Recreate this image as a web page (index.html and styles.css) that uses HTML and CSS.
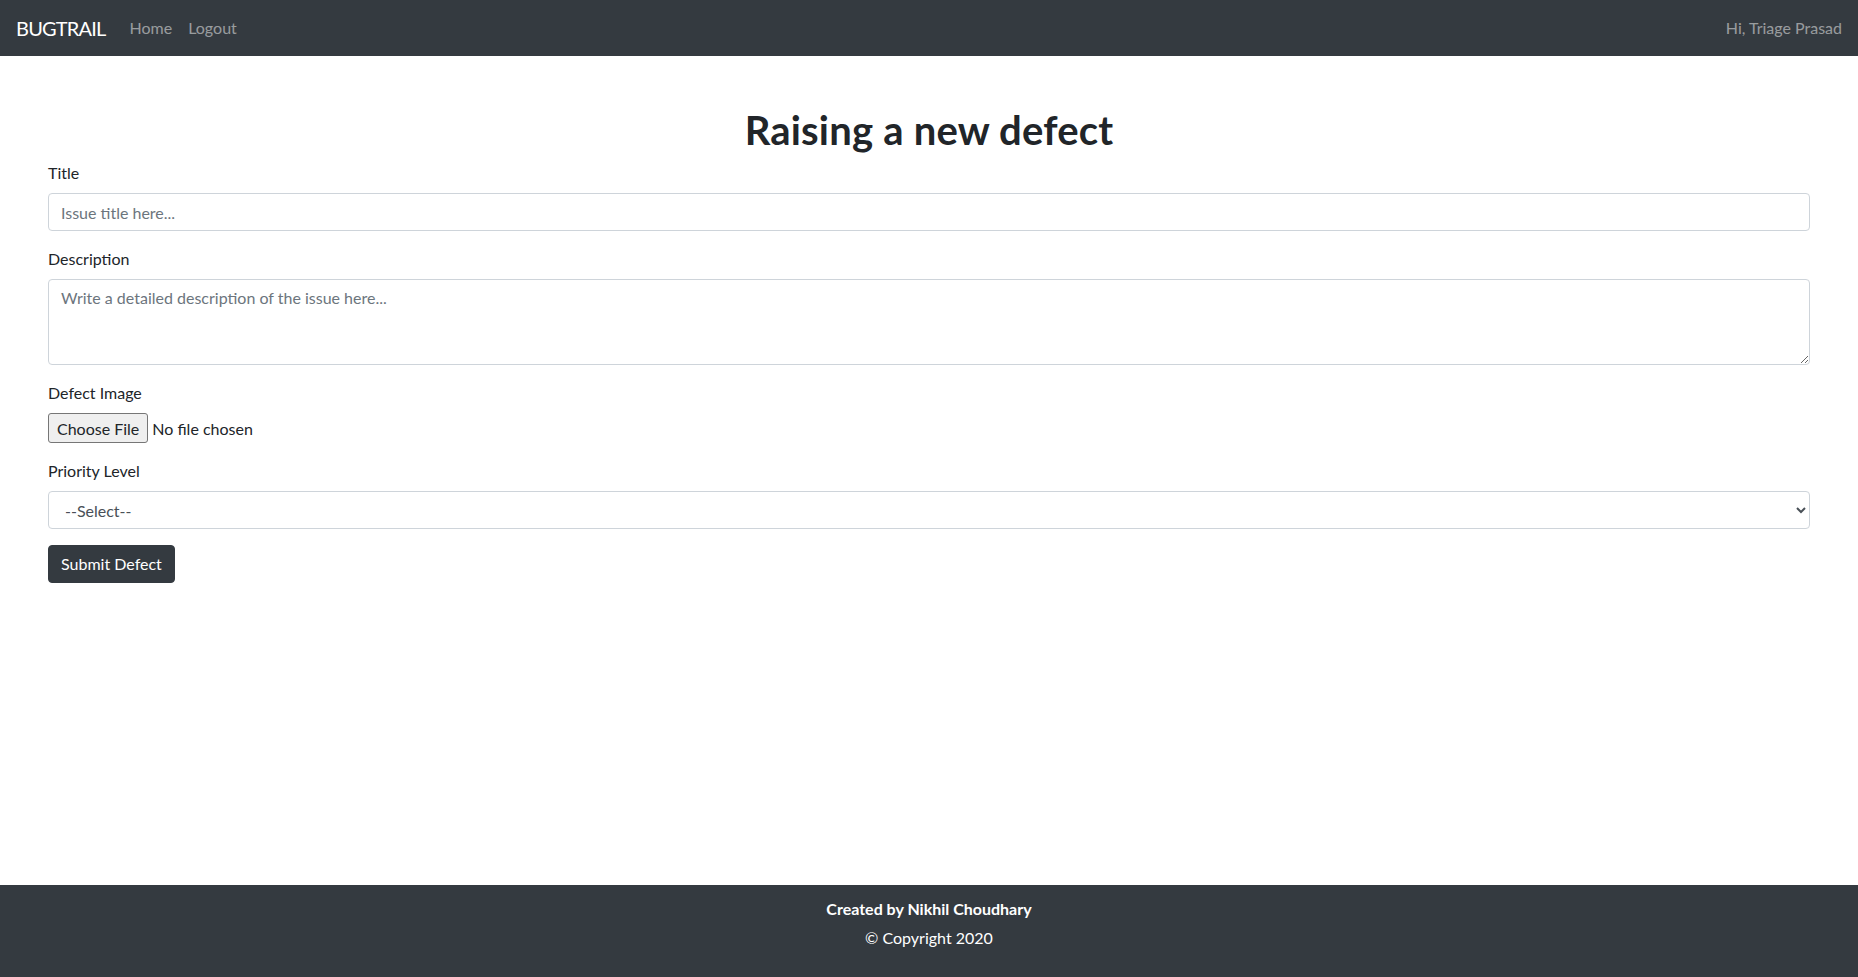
FILE: index.html
```html
<!DOCTYPE html>
<html lang="en">
<head>
<meta charset="utf-8">
<title>BugTrail</title>
<link rel="stylesheet" href="styles.css">
</head>
<body>
<nav class="navbar">
  <div class="nav-left">
    <a class="brand" href="#">BUGTRAIL</a>
    <a class="nav-link" href="#">Home</a>
    <a class="nav-link" href="#">Logout</a>
  </div>
  <span class="nav-user">Hi, Triage Prasad</span>
</nav>
<main class="content">
  <h1 class="page-title">Raising a new defect</h1>
  <form class="defect-form">
    <div class="form-group">
      <label class="label" for="title">Title</label>
      <input class="form-control" id="title" type="text" placeholder="Issue title here...">
    </div>
    <div class="form-group">
      <label class="label" for="desc">Description</label>
      <textarea class="form-control textarea" id="desc" rows="3" placeholder="Write a detailed description of the issue here..."></textarea>
    </div>
    <div class="form-group">
      <label class="label" for="img">Defect Image</label>
      <input class="file-input" id="img" type="file">
    </div>
    <div class="form-group">
      <label class="label" for="prio">Priority Level</label>
      <select class="form-control select" id="prio">
        <option>--Select--</option>
        <option>Low</option>
        <option>Medium</option>
        <option>High</option>
      </select>
    </div>
    <button class="btn-submit" type="button">Submit Defect</button>
  </form>
</main>
<footer class="footer">
  <div class="footer-author">Created by Nikhil Choudhary</div>
  <div class="footer-copy">© Copyright 2020</div>
</footer>
</body>
</html>
```
FILE: styles.css
```css
* { box-sizing: border-box; }
html, body { height: 100%; }
body {
  margin: 0;
  font-family: Lato, "Liberation Sans", sans-serif;
  font-size: 16px;
  line-height: 1.5;
  color: #212529;
  background: #fff;
  display: flex;
  flex-direction: column;
  min-height: 100vh;
}
.navbar {
  height: 56px;
  background: #343a40;
  display: flex;
  align-items: center;
  justify-content: space-between;
  padding: 8px 16px;
  flex: none;
}
.nav-left { display: flex; align-items: center; }
.brand {
  color: #fff;
  font-size: 20px;
  letter-spacing: -0.8px;
  text-decoration: none;
  margin-right: 16px;
  line-height: 30px;
}
.nav-link {
  color: rgba(255,255,255,.5);
  text-decoration: none;
  padding: 8px;
}
.nav-user { color: rgba(255,255,255,.5); }
.content {
  flex: 1 0 auto;
  padding: 0 48px;
}
.page-title {
  margin: 50px 0 7px;
  text-align: center;
  font-size: 40px;
  font-weight: 700;
  line-height: 1.2;
  letter-spacing: 0.2px;
}
.form-group { margin-bottom: 16px; }
.label { display: inline-block; margin-bottom: 8px; }
.form-control {
  display: block;
  width: 100%;
  height: 38px;
  padding: 6px 12px;
  font-family: inherit;
  font-size: 16px;
  line-height: 1.5;
  color: #495057;
  background: #fff;
  border: 1px solid #ced4da;
  border-radius: 4px;
}
.form-control::placeholder { color: #6c757d; opacity: 1; }
.textarea { height: 86px; resize: vertical; }
.select { color: #495057; }
.file-input {
  display: block;
  height: 30px;
  font-family: inherit;
  font-size: 16px;
  line-height: 28px;
  color: #212529;
}
.file-input::file-selector-button {
  font-family: inherit;
  font-size: 16px;
  height: 30px;
  padding: 0 8px;
  margin-right: 4px;
  color: #212529;
  background: #efefef;
  border: 1px solid #767676;
  border-radius: 3px;
}
.btn-submit {
  font-family: inherit;
  font-size: 16px;
  line-height: 1.5;
  padding: 6px 12px;
  color: #fff;
  background: #343a40;
  border: 1px solid #343a40;
  border-radius: 4px;
  cursor: pointer;
}
.footer {
  flex: none;
  height: 92px;
  background: #343a40;
  color: #fff;
  text-align: center;
  padding-top: 12px;
}
.footer-author { font-weight: 700; }
.footer-copy { margin-top: 5px; }
```
